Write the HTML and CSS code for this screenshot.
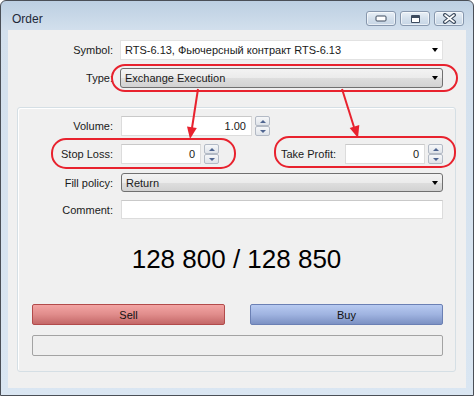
FILE: index.html
```html
<!DOCTYPE html>
<html lang="en">
<head>
    <meta charset="UTF-8">
    <title>Order</title>
    <link rel="stylesheet" href="styles.css">
</head>
<body>
    <div class="window">
        <div class="titlebar">
            <span class="title">Order</span>
            <div class="caption-buttons">
                <div class="cap-btn">
                    <svg width="12" height="7" viewBox="0 0 12 7"><rect x="1" y="1" width="10" height="5" rx="1" fill="#fff" stroke="#3d4b5e"/></svg>
                </div>
                <div class="cap-btn">
                    <svg width="11" height="10" viewBox="0 0 11 10"><rect x="1" y="1" width="9" height="8" rx="1" fill="#3d4b5e"/><rect x="2" y="4" width="7" height="4" fill="#fff"/></svg>
                </div>
                <div class="cap-btn">
                    <svg width="15" height="11" viewBox="0 0 15 11"><path d="M3 2 L12 9 M12 2 L3 9" stroke="#3d4b5e" stroke-width="4" stroke-linecap="round"/><path d="M3 2 L12 9 M12 2 L3 9" stroke="#fff" stroke-width="1.6" stroke-linecap="round"/></svg>
                </div>
            </div>
        </div>

        <div class="client">
            <div class="form-top">
                <div class="row">
                    <span class="lbl lbl-top">Symbol:</span>
                    <div class="combo combo-white">
                        <span>RTS-6.13, Фьючерсный контракт RTS-6.13</span>
                        <span class="caret"></span>
                    </div>
                </div>
                <div class="row">
                    <span class="lbl lbl-top">Type:</span>
                    <div class="combo">
                        <span>Exchange Execution</span>
                        <span class="caret"></span>
                    </div>
                </div>
            </div>

            <div class="group">
                <div class="row row-volume">
                    <span class="lbl">Volume:</span>
                    <div class="field field-volume">1.00</div>
                    <div class="spin">
                        <div class="spin-btn"><span class="arrow-up"></span></div>
                        <div class="spin-btn"><span class="arrow-down"></span></div>
                    </div>
                </div>
                <div class="row row-levels">
                    <span class="lbl">Stop Loss:</span>
                    <div class="field field-small">0</div>
                    <div class="spin">
                        <div class="spin-btn"><span class="arrow-up"></span></div>
                        <div class="spin-btn"><span class="arrow-down"></span></div>
                    </div>
                    <div class="take-profit">
                        <span class="lbl-tp">Take Profit:</span>
                        <div class="field field-small">0</div>
                        <div class="spin">
                            <div class="spin-btn"><span class="arrow-up"></span></div>
                            <div class="spin-btn"><span class="arrow-down"></span></div>
                        </div>
                    </div>
                </div>
                <div class="row row-fill">
                    <span class="lbl">Fill policy:</span>
                    <div class="combo">
                        <span>Return</span>
                        <span class="caret"></span>
                    </div>
                </div>
                <div class="row row-comment">
                    <span class="lbl">Comment:</span>
                    <div class="field field-wide"></div>
                </div>

                <div class="price">128 800 / 128 850</div>

                <div class="actions">
                    <div class="btn btn-sell">Sell</div>
                    <div class="btn btn-buy">Buy</div>
                </div>
                <div class="status"></div>
            </div>
        </div>

        <!-- пометки поверх окна -->
        <svg class="annotations" width="474" height="396" viewBox="0 0 474 396">
            <g fill="none" stroke="#e8222e" stroke-width="2">
                <rect x="112" y="65" width="345" height="26" rx="13"/>
                <rect x="52" y="139" width="183" height="29" rx="14"/>
                <rect x="275" y="137" width="180" height="30" rx="14"/>
                <line x1="198" y1="89" x2="192" y2="128"/>
                <line x1="342" y1="89" x2="354" y2="127"/>
            </g>
            <g fill="#e8222e">
                <polygon points="190,139 196.8,128 187,126.4"/>
                <polygon points="358,138 359.3,125 349.7,128"/>
            </g>
        </svg>
    </div>
</body>
</html>
```

FILE: styles.css
```css
* {
    margin: 0;
    padding: 0;
    box-sizing: border-box;
}

body {
    width: 474px;
    height: 396px;
    overflow: hidden;
    font-family: "Liberation Sans", Arial, sans-serif;
    font-size: 11px;
    color: #1a1a1a;
    background: #fff;
}

.window {
    position: relative;
    width: 474px;
    height: 396px;
    border: 1px solid #4a4f57;
    border-radius: 6px 6px 0 0;
    padding: 0 7px 7px 7px;
    background: linear-gradient(#bccfe2, #d3e0ed 30px, #dae6f2);
}

.titlebar {
    height: 29px;
    display: flex;
    align-items: flex-start;
    justify-content: space-between;
    padding: 10px 2px 0 4px;
}

.title {
    font-size: 12px;
    color: #1e2838;
    line-height: 16px;
}

.caption-buttons {
    display: flex;
    gap: 4px;
}

.cap-btn {
    width: 30px;
    height: 15px;
    border: 1px solid #8797ad;
    border-radius: 3px;
    background: linear-gradient(#e9f0f7, #d4e0ec 50%, #c6d5e5);
    box-shadow: inset 0 0 0 1px rgba(255,255,255,0.6);
    display: flex;
    justify-content: center;
    align-items: center;
}

.client {
    height: 358px;
    background: #f0f0f0;
    padding: 10px 0 0 0;
}

.form-top {
    display: flex;
    flex-direction: column;
    gap: 8px;
    padding-right: 23px;
}

.row {
    display: flex;
    align-items: center;
    height: 20px;
}

.lbl {
    width: 95px;
    text-align: right;
    margin-right: 8px;
    flex-shrink: 0;
}

.lbl-top {
    width: 105px;
    margin-right: 7px;
}

.combo {
    flex: 1;
    height: 20px;
    border: 1px solid #707070;
    border-radius: 3px;
    background: linear-gradient(#f3f3f3, #ebebeb 50%, #dedede 50%, #d2d2d2);
    display: flex;
    align-items: center;
    justify-content: space-between;
    padding: 0 4px 0 4px;
}

.combo-white {
    background: #fff;
    border-color: #e2e2e2;
    border-radius: 0;
}

.caret {
    width: 0;
    height: 0;
    border-left: 3.5px solid transparent;
    border-right: 3.5px solid transparent;
    border-top: 4px solid #000;
}

.group {
    margin: 19px 10px 0 9px;
    height: 265px;
    border: 1px solid #d5dfe5;
    border-radius: 3px;
    box-shadow: inset 1px 1px 0 #fff;
    padding: 8px 12px 0 0;
}

.field {
    height: 20px;
    background: #fff;
    border: 1px solid #dcdcdc;
    border-top-color: #c9c9c9;
    text-align: right;
    padding-right: 5px;
    line-height: 18px;
}

.field-volume {
    width: 131px;
}

.field-small {
    width: 80px;
}

.field-wide {
    flex: 1;
    height: 19px;
}

.spin {
    width: 15px;
    height: 20px;
    margin-left: 3px;
    display: flex;
    flex-direction: column;
}

.spin-btn {
    flex: 1;
    border: 1px solid #b3bac5;
    border-radius: 2px;
    background: linear-gradient(#f6f7f9, #dfe3e9);
    display: flex;
    justify-content: center;
    align-items: center;
}

.arrow-up {
    border-left: 3px solid transparent;
    border-right: 3px solid transparent;
    border-bottom: 3px solid #4f6590;
}

.arrow-down {
    border-left: 3px solid transparent;
    border-right: 3px solid transparent;
    border-top: 3px solid #4f6590;
}

.row-levels {
    margin-top: 8px;
}

.take-profit {
    margin-left: auto;
    display: flex;
    align-items: center;
}

.lbl-tp {
    margin-right: 9px;
}

.row-fill {
    margin-top: 9px;
    height: 19px;
}

.row-fill .combo {
    height: 19px;
}

.row-comment {
    margin-top: 8px;
    height: 19px;
}

.price {
    margin-top: 24px;
    height: 32px;
    line-height: 32px;
    text-align: center;
    font-size: 26px;
    color: #000;
    padding-left: 12px;
}

.actions {
    margin-top: 29px;
    margin-left: 14px;
    display: flex;
    justify-content: space-between;
}

.btn {
    width: 193px;
    height: 21px;
    border-radius: 2px;
    display: flex;
    justify-content: center;
    align-items: center;
    font-size: 11px;
    color: #111;
}

.btn-sell {
    border: 1px solid #b24b4b;
    background: linear-gradient(#f3a4a3, #e08c8b 50%, #c46868);
}

.btn-buy {
    border: 1px solid #6b80b4;
    background: linear-gradient(#b7caf1, #9fb3e0 50%, #7c91c3);
}

.status {
    margin-top: 10px;
    margin-left: 14px;
    height: 21px;
    border: 1px solid #a3a3a3;
    border-radius: 2px;
    background: #efefef;
}

.annotations {
    position: absolute;
    top: -1px;
    left: -1px;
    pointer-events: none;
}
```
